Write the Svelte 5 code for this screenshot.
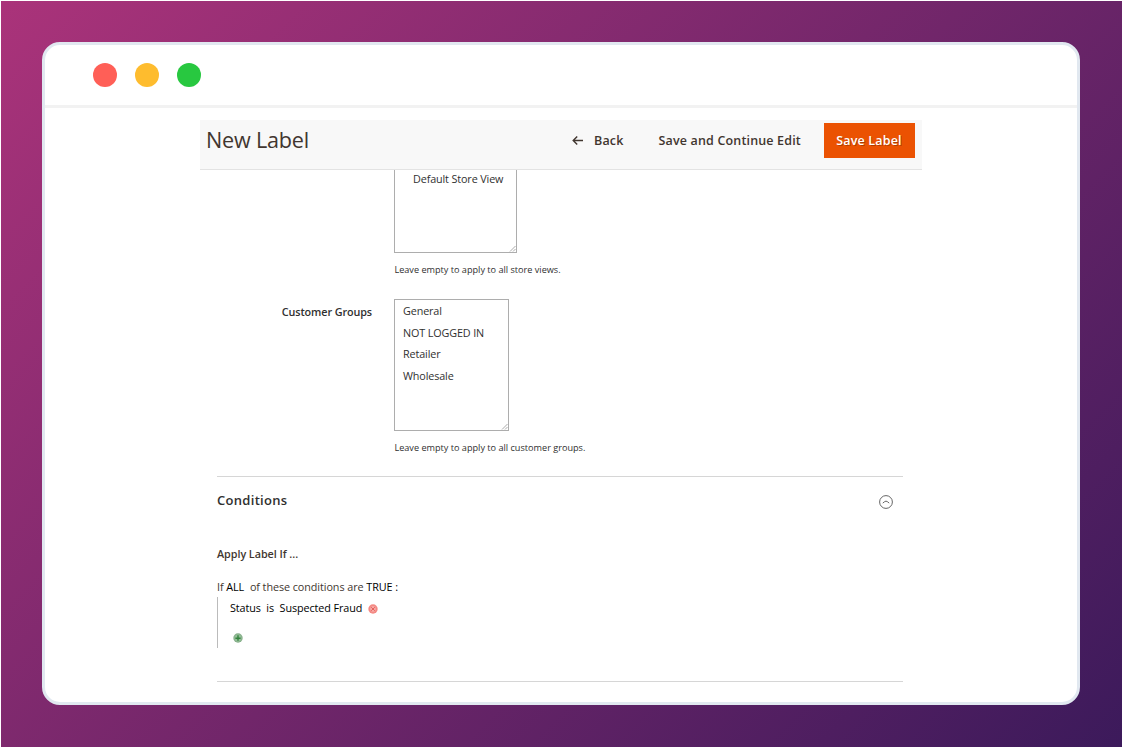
<script>
    const dots = ['red', 'yellow', 'green'];
    const storeViews = ['Default Store View'];
    const customerGroups = ['General', 'NOT LOGGED IN', 'Retailer', 'Wholesale'];

    let isOpen = $state(true);
</script>

{#snippet listBox(items, name)}
    <div class="list-box {name}">
        <ul>
            {#each items as item}
                <li><span>{item}</span></li>
            {/each}
        </ul>
        <svg class="grip" viewBox="0 0 7 7" width="7" height="7">
            <path d="M1 6.5L6.5 1M4 6.5L6.5 4" />
        </svg>
    </div>
{/snippet}

<div class="backdrop">
    <div class="window">
        <div class="title-bar">
            {#each dots as dot}
                <span class="dot {dot}"></span>
            {/each}
        </div>

        <main class="page">
            <header class="page-header">
                <h1>New Label</h1>
                <button class="back">
                    <svg viewBox="0 0 12 10" width="12" height="10">
                        <path d="M5.2 0.5L1.2 4.5L5.2 8.5M1.4 4.5H11" />
                    </svg>
                    <span>Back</span>
                </button>
                <button class="continue">Save and Continue Edit</button>
                <button class="save">Save Label</button>
            </header>

            <section class="field stores">
                <div class="control">
                    {@render listBox(storeViews, 'store-list')}
                    <p class="note">Leave empty to apply to all store views.</p>
                </div>
            </section>

            <section class="field groups">
                <div class="label">Customer Groups</div>
                <div class="control">
                    {@render listBox(customerGroups, 'group-list')}
                    <p class="note">Leave empty to apply to all customer groups.</p>
                </div>
            </section>

            <section class="conditions">
                <div class="conditions-title">
                    <h2>Conditions</h2>
                    <button class="toggle" aria-label="Toggle conditions" onclick={() => (isOpen = !isOpen)}>
                        <svg viewBox="0 0 14 15" width="14" height="15">
                            <circle cx="7" cy="8" r="6.4" />
                            <path d="M3.8 9.1Q5.4 7.5 7 7.1Q8.6 7.5 10.2 9.1" />
                        </svg>
                    </button>
                </div>
                {#if isOpen}
                    <h3>Apply Label If ...</h3>
                    <p class="rule">If <b class="all">ALL</b> <span>of these conditions are</span> <b>TRUE :</b></p>
                    <div class="rule-tree">
                        <div class="rule-item">
                            <span>Status</span>
                            <span>is</span>
                            <span>Suspected Fraud</span>
                            <svg viewBox="0 0 10 10" width="10" height="10">
                                <circle cx="5" cy="5" r="4.7" fill="#f58b85" />
                                <circle cx="5" cy="5" r="3.4" fill="#f8aaa5" stroke="#ee7773" stroke-width="0.6" />
                                <path d="M3.2 3.2L6.8 6.8M6.8 3.2L3.2 6.8" stroke="#e4605c" />
                            </svg>
                        </div>
                        <svg class="add" viewBox="0 0 10 10" width="10" height="10">
                            <circle cx="5" cy="5" r="4.7" fill="#86af8a" />
                            <circle cx="5" cy="5" r="3.5" fill="#94be98" />
                            <path d="M5 2.2V7.8M2.4 5.2H7.6" stroke="#35843f" stroke-width="1.4" />
                        </svg>
                    </div>
                {/if}
            </section>
        </main>
    </div>
</div>

<style>
    :global(body) {
        background: #fff;
    }
    .backdrop {
        box-sizing: border-box;
        width: 1121px;
        height: 746px;
        margin: 1px 0 0 1px;
        padding: 41px;
        background: linear-gradient(135deg, #aa337a, #3c1a5b);
        display: flow-root;
        font-family: "Open Sans", sans-serif;
        color: #303030;
    }
    .window {
        box-sizing: border-box;
        width: 1038px;
        height: 663px;
        border: 3px solid #e1e8f0;
        border-radius: 18px;
        background: #fff;
        overflow: hidden;
    }
    .title-bar {
        display: flex;
        align-items: center;
        gap: 18px;
        height: 60px;
        padding-left: 48px;
        border-bottom: 3px solid #f2f2f2;
    }
    .dot {
        width: 24px;
        height: 24px;
        border-radius: 50%;
    }
    .red { background: #ff5f57; }
    .yellow { background: #febc2e; }
    .green { background: #28c840; }

    h1, h2, h3, p, ul {
        margin: 0;
        padding: 0;
    }
    ul {
        list-style: none;
    }
    button {
        padding: 0;
        border: 0;
        background: none;
        font: 600 12.5px/35px "Open Sans", sans-serif;
        color: #41362f;
        letter-spacing: 0.16px;
        white-space: nowrap;
        cursor: pointer;
    }
    svg {
        display: block;
        fill: none;
    }
    .page {
        width: 722px;
        margin: 12px 0 0 155px;
    }
    .page-header {
        box-sizing: border-box;
        display: flex;
        align-items: flex-start;
        height: 50px;
        padding: 3px 7.5px 0 6px;
        border-bottom: 1px solid #e3e3e3;
        background: #f8f8f8;
    }
    h1 {
        flex: 1;
        font-size: 21.6px;
        line-height: 33px;
        font-weight: 400;
        letter-spacing: -0.2px;
        color: #41362f;
    }
    .back {
        display: flex;
        align-items: center;
        gap: 10px;
        width: 86.5px;
    }
    .back svg {
        stroke: #41362f;
        stroke-width: 1.4;
    }
    .continue {
        width: 165px;
        text-align: left;
    }
    .save {
        width: 91px;
        height: 35px;
        background: #eb5202;
        color: #fff;
        text-shadow: 1px 1px 0 rgba(0, 0, 0, 0.25);
    }
    .field {
        display: flex;
        padding-left: 194px;
    }
    .groups {
        padding-left: 0;
        margin-top: 20px;
    }
    .label {
        width: 172px;
        margin-right: 22px;
        padding-top: 3px;
        font-size: 10.8px;
        line-height: 20px;
        font-weight: 600;
        letter-spacing: -0.1px;
        text-align: right;
    }
    .list-box {
        position: relative;
        box-sizing: border-box;
        border: 1px solid #adadad;
        font-size: 10.8px;
        letter-spacing: -0.13px;
        line-height: 21.6px;
    }
    .store-list {
        width: 123px;
        height: 83px;
        padding-left: 18px;
        border-top: 0;
        line-height: 18px;
    }
    .group-list {
        width: 115px;
        height: 132px;
        padding: 0 0 0 8px;
    }
    .grip {
        position: absolute;
        right: 0;
        bottom: 0;
        stroke: #888;
        stroke-width: 0.7;
    }
    .note {
        margin-top: 8px;
        padding-left: 0.4px;
        font-size: 9.15px;
        line-height: 18px;
    }
    .conditions {
        box-sizing: border-box;
        width: 686px;
        height: 206px;
        margin: 19px 0 0 17px;
        border: solid #d6d6d6;
        border-width: 1px 0;
    }
    .conditions-title {
        display: flex;
        justify-content: space-between;
        align-items: center;
        height: 48px;
        padding-right: 10px;
    }
    h2 {
        padding-bottom: 3px;
        font-size: 13px;
        line-height: 24px;
        font-weight: 600;
        letter-spacing: 0.3px;
    }
    .toggle svg {
        stroke: #555;
        stroke-width: 0.9;
    }
    h3 {
        margin-top: 19px;
        font-size: 10.8px;
        line-height: 20px;
        font-weight: 600;
        letter-spacing: -0.05px;
        color: #41362f;
    }
    .rule {
        margin-top: 13px;
        font-size: 10.8px;
        line-height: 20px;
        letter-spacing: -0.07px;
        color: #41362f;
        white-space: nowrap;
    }
    .rule b {
        font-weight: 400;
        color: #000;
    }
    .rule .all {
        margin-right: 3px;
    }
    .rule-tree {
        box-sizing: border-box;
        height: 51px;
        padding-left: 12px;
        border-left: 1px solid #bbb;
    }
    .rule-item {
        display: flex;
        align-items: center;
        gap: 5.5px;
        font-size: 10.8px;
        line-height: 22px;
        letter-spacing: -0.09px;
        color: #000;
    }
    .rule-item svg {
        margin-top: 2px;
    }
    .add {
        margin: 14px 0 0 2.5px;
    }
</style>
